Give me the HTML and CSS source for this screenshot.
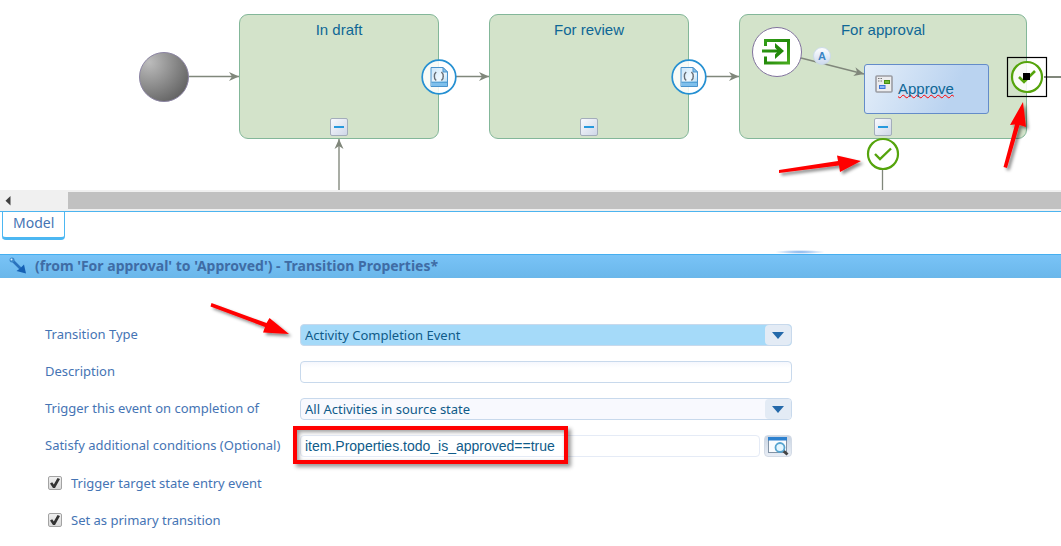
FILE: index.html
```
<!DOCTYPE html>
<html lang="en">
<head>
<meta charset="utf-8">
<title>Transition Properties</title>
<link rel="stylesheet" href="styles.css">
</head>
<body>
<main class="app">
  <section class="canvas" aria-label="Workflow diagram">
    <svg class="links" width="2000" height="190" aria-hidden="true">
      <defs>
        <radialGradient id="ball" cx="0.2" cy="0.2" r="0.95">
          <stop offset="0" stop-color="#bcbcbc"/><stop offset="1" stop-color="#606060"/>
        </radialGradient>
        <marker id="head" viewBox="0 0 10 10" refX="10" refY="5" markerWidth="10" markerHeight="10" markerUnits="userSpaceOnUse" orient="auto">
          <path d="M0 .5 10 5 0 9.5 3 5z" fill="#80877b"/>
        </marker>
      </defs>
      <g stroke="#80877b" stroke-width="1.3" fill="none">
        <path d="M188 76.500H239" marker-end="url(#head)"/>
        <path d="M455 76.500H489" marker-end="url(#head)"/>
        <path d="M705 76.500H739" marker-end="url(#head)"/>
        <path d="M339 190V139" stroke="#a9ada5" stroke-width="2" marker-end="url(#head)"/>
        <path d="M882.500 168V190"/>
        <path d="M1044 77H2000" stroke-width="2"/>
      </g>
      <circle cx="164" cy="77" r="24.500" fill="url(#ball)" stroke="#8b84a3"/>
    </svg>

    <div class="state draft"><h2 class="state-name">In draft</h2><button class="collapse" aria-label="Collapse In draft"></button></div>
    <div class="state review"><h2 class="state-name">For review</h2><button class="collapse" aria-label="Collapse For review"></button></div>
    <div class="state approval"><h2 class="state-name">For approval</h2><button class="collapse" aria-label="Collapse For approval"></button></div>

    <div class="activity">
      <svg width="18" height="18" viewBox="0 0 18 18" aria-hidden="true">
        <rect x="1" y="1" width="16" height="16" rx="1" fill="#ececee" stroke="#9a9ca3" stroke-width="1.600"/>
        <path d="M3 3.500h1.500M5.500 3.500H7M3 6h1.500M5.500 6H7" stroke="#777" stroke-width="1.200"/>
        <rect x="9.500" y="5.500" width="5" height="3" fill="#6fba35" stroke="#458f12"/>
        <rect x="4.500" y="10.500" width="5.500" height="3" fill="#8db8f8" stroke="#3c76d8"/>
      </svg>
      <span class="activity-name">Approve</span>
    </div>

    <svg class="links" width="2000" height="190" aria-hidden="true">
      <defs>
        <linearGradient id="page" x1="0" y1="0" x2="1" y2="1">
          <stop offset="0" stop-color="#c9e5fa"/><stop offset=".55" stop-color="#f0f9ff"/><stop offset="1" stop-color="#9fd2f4"/>
        </linearGradient>
        <linearGradient id="green" x1="0" y1="0" x2="1" y2="1">
          <stop offset="0" stop-color="#34a01a"/><stop offset=".5" stop-color="#22890a"/><stop offset="1" stop-color="#48ab1e"/>
        </linearGradient>
        <linearGradient id="chip" x1="0" y1="0" x2="0" y2="1">
          <stop offset="0" stop-color="#fff"/><stop offset="1" stop-color="#ccd9ee"/>
        </linearGradient>
        <filter id="cast" x="-30%" y="-30%" width="170%" height="170%">
          <feDropShadow dx="2.500" dy="2.500" stdDeviation="1.500" flood-color="#000" flood-opacity=".45"/>
        </filter>
        <g id="script">
          <circle r="16.800" fill="#fff" fill-opacity=".85" stroke="#2590d2" stroke-width="1.700"/>
          <path d="M-8-9.500H4L8.500-5V9.500H-8z" fill="url(#page)" stroke="#4a93cc"/>
          <path d="M-7.500 5.500h15.500v3.500h-15.500z" fill="#7fc0ec"/>
          <path d="M-7.500 5.200h15.500" stroke="#328bc9"/>
          <path d="M4-9.500V-5h4.500z" fill="#8bc4ec" stroke="#4a93cc"/>
          <path d="M-2.800-5Q-5-3-4.600-.8-5 1.500-2.800 3.500M2.400-5Q4.600-3 4.200-.8 4.600 1.500 2.400 3.500" fill="none" stroke="#666d75" stroke-width="1.400"/>
        </g>
      </defs>
      <use href="#script" x="439" y="77"/>
      <use href="#script" x="689" y="77"/>

      <path d="M801 58 864 74" stroke="#80877b" stroke-width="1.600" marker-end="url(#head)"/>
      <circle cx="777" cy="52" r="24.500" fill="#fff" stroke="#81739d"/>
      <path d="M765.500 46V40.500H788.500V63H765.500V56.500M762 51H780" fill="none" stroke="url(#green)" stroke-width="3"/>
      <path d="M775 43 784 51 775 59V54.500L778 51 775 47.500z" fill="#22890a"/>
      <circle cx="822" cy="56" r="8.500" fill="url(#chip)" stroke="#ccdbe8"/>
      <text class="chip-text" x="822" y="60" text-anchor="middle">A</text>

      <circle cx="883" cy="154" r="15" fill="#fff" fill-opacity=".85" stroke="#55a40c" stroke-width="2.200"/>
      <path d="M875 154 880 159 891 148.500" fill="none" stroke="#55a40c" stroke-width="2.400"/>

      <rect x="1007.500" y="57.500" width="39" height="39" fill="none" stroke="#000" stroke-width="1.200"/>
      <circle cx="1027" cy="77" r="15" fill="#fff" fill-opacity=".85" stroke="#55a40c" stroke-width="2.200"/>
      <path d="M1019 77 1024 82 1035 71" fill="none" stroke="#55a40c" stroke-width="2.600"/>
      <path d="M1023 73h7v7h-7z"/>

      <g fill="#f00" filter="url(#cast)">
        <path d="M779 170 838 161 837 155.500 861 161 840 172 839 165.500 779 173z"/>
        <path d="M1003.500 167 1015 124.500 1010 125 1023 102 1026 127 1019.500 125 1007 168z"/>
      </g>
    </svg>
  </section>

  <div class="scrollbar" aria-hidden="true">
    <svg class="scroll-arrow" width="6" height="10" viewBox="0 0 6 10"><path d="M5.500 0V9.500L.5 4.700z" fill="#404040"/></svg>
    <div class="scroll-thumb"></div>
  </div>

  <nav class="tabs"><button class="tab">Model</button></nav>

  <header class="titlebar">
    <span class="grip" aria-hidden="true"></span>
    <svg width="18" height="18" viewBox="0 0 18 18" aria-hidden="true">
      <path d="M3 3 12 12" stroke="#2a72bd" stroke-width="2.600"/>
      <circle cx="3" cy="3" r="2.500" fill="#3a86c8"/><circle cx="2.500" cy="2.500" r="1" fill="#d8efff"/>
      <path d="M15 7.500 17 16.500 7.500 14 11 11.500z" fill="#1560b4"/>
    </svg>
    <h1 class="title">(from 'For approval' to 'Approved') - Transition Properties*</h1>
  </header>

  <form class="form">
    <svg class="pointer" width="90" height="44" aria-hidden="true">
      <path d="M1.500-1 56.500 19 59.500 14 79 30 53 28.500 55 23 .5 2.500z" fill="#f00" filter="url(#cast)"/>
    </svg>
    <label class="label" for="type">Transition Type</label>
    <div class="pick">
      <select class="field select active" id="type"><option>Activity Completion Event</option></select>
      <svg class="drop" viewBox="0 0 26 20" width="26" height="20" aria-hidden="true"><path d="M7 7H19L13 14z" fill="#2469aa"/></svg>
    </div>
    <label class="label" for="desc">Description</label>
    <input class="field" id="desc" type="text">
    <label class="label" for="scope">Trigger this event on completion of</label>
    <div class="pick">
      <select class="field select" id="scope"><option>All Activities in source state</option></select>
      <svg class="drop" viewBox="0 0 26 20" width="26" height="20" aria-hidden="true"><path d="M7 7H19L13 14z" fill="#2469aa"/></svg>
    </div>
    <label class="label" for="cond">Satisfy additional conditions (Optional)</label>
    <div class="condition">
      <input class="field expression" id="cond" type="text" value="item.Properties.todo_is_approved==true">
      <button class="lookup" type="button" aria-label="Browse conditions">
        <svg width="22" height="20" viewBox="0 0 22 20" aria-hidden="true">
          <rect x="1.500" y="1.500" width="18" height="15" fill="#f9fcff" stroke="#8293a5"/>
          <path d="M1 1h19v3.500H1z" fill="#2d81cf"/>
          <path d="M16 14.500 20.500 18.500" stroke="#444" stroke-width="3"/>
          <circle cx="13" cy="11.500" r="4.500" fill="#e1f5ff" fill-opacity=".9" stroke="#57a4cf" stroke-width="1.800"/>
        </svg>
      </button>
      <span class="highlight" aria-hidden="true"></span>
    </div>
    <label class="check"><input class="box" type="checkbox" checked>Trigger target state entry event</label>
    <label class="check"><input class="box" type="checkbox" checked>Set as primary transition</label>
  </form>
</main>
</body>
</html>
```
FILE: styles.css
```
* { box-sizing: border-box; }
body {
  margin: 0;
  background: #fff;
  color: #4574b4;
  font: 14px/20px "Noto Sans", "Open Sans", sans-serif;
}
button, input, select { font: inherit; }
.app { overflow: hidden; }

/* Diagram */
.canvas { position: relative; height: 190px; overflow: hidden; font-family: "Liberation Sans", Arial, sans-serif; }
.links { position: absolute; left: 0; top: 0; }
.state {
  position: absolute;
  top: 14px;
  width: 200px;
  height: 125px;
  padding: 5px 0 2px;
  border: 1px solid #83b799;
  border-radius: 9px;
  background: #d3e3ca;
  display: flex;
  flex-direction: column;
  align-items: center;
  justify-content: space-between;
}
.draft { left: 239px; }
.review { left: 489px; }
.approval { left: 739px; width: 288px; }
.state-name { margin: 0; font-size: 15px; line-height: 20px; font-weight: 400; color: #0e6796; }
.collapse {
  width: 18px;
  height: 18px;
  padding: 0 3px;
  border: 1px solid #a3adbb;
  border-radius: 2px;
  background: linear-gradient(135deg, #f8f9fd, #cfd8e8);
  display: flex;
  align-items: center;
}
.collapse::before { content: ""; flex: 1; height: 2px; background: #2799dd; }
.activity {
  position: absolute;
  left: 864px;
  top: 64px;
  width: 125px;
  height: 50px;
  padding: 10px;
  border: 1px solid #648cc9;
  border-radius: 3px;
  background: linear-gradient(115deg, #e4eef9, #bad3f0 70%);
  display: flex;
  gap: 5px;
}
.activity-name {
  align-self: end;
  font-size: 15px;
  line-height: 28px;
  color: #0e6796;
  text-decoration: underline wavy #f00 1px;
  text-decoration-skip-ink: none;
  text-underline-offset: 0;
}
.chip-text { font-size: 11px; font-weight: 700; fill: #3a86c5; }

/* Horizontal scrollbar */
.scrollbar {
  display: flex;
  align-items: center;
  height: 21px;
  padding-left: 5px;
  gap: 57px;
  background: #f0f0f0;
}
.scroll-thumb { flex: 1; height: 17px; background: #c1c1c1; }

/* Tabs */
.tabs { height: 43px; padding-left: 2px; border-top: 1px solid #4cb4ef; }
.tab {
  display: block;
  height: 28px;
  padding: 0 10px 4px;
  border: 1px solid #4cb7f2;
  border-top: 0;
  border-bottom-width: 3px;
  border-radius: 0 0 4px 4px;
  background: #fff;
  color: #4574b4;
  font-size: 14px;
}

/* Title bar */
.titlebar {
  position: relative;
  display: flex;
  align-items: center;
  gap: 8px;
  height: 24px;
  padding: 0 9px 2px;
  border-top: 1px solid #45aff0;
  background: linear-gradient(#79c3f7, #6ab7ea);
}
.title { margin: 0; font-size: 14px; line-height: 20px; font-weight: 700; color: #3f6ca5; }
.grip {
  position: absolute;
  left: 775px;
  bottom: 24px;
  width: 50px;
  height: 4px;
  background: radial-gradient(closest-side, #79aceb, #fff0);
}

/* Properties form */
.form {
  position: relative;
  display: grid;
  grid-template-columns: 240px minmax(0, 492px);
  column-gap: 15px;
  row-gap: 15px;
  padding: 46px 45px 16px;
}
.label, .check { line-height: 20px; font-size: 13px; white-space: nowrap; }
.field {
  display: block;
  width: 100%;
  height: 22px;
  padding: 0 4px;
  border: 1px solid #c8d9ec;
  border-radius: 4px;
  outline: 0;
  background: linear-gradient(#f5f7fd, #fff 6px);
  color: #0f5b89;
  font-size: 13px;
}
.select { appearance: none; background: #f8f9fe; }
.active { background: #a5daf9; }
.pick { position: relative; }
.drop {
  position: absolute;
  right: 1px;
  top: 1px;
  border-radius: 4px;
  background: #e3ebf5;
  pointer-events: none;
}
.condition { position: relative; display: flex; gap: 4px; }
.expression {
  flex: 1;
  min-width: 0;
  border-color: #e5ebf6;
  background: #fff;
  font-family: "Liberation Sans", Arial, sans-serif;
  font-size: 14px;
}
.lookup {
  width: 28px;
  height: 22px;
  padding: 0;
  border: 1px solid #d3dbe6;
  border-radius: 4px;
  background: linear-gradient(#cad5e3, #e8edf5);
  display: grid;
  place-items: center;
}
.highlight {
  position: absolute;
  left: -7px;
  top: -9px;
  width: 275px;
  height: 38px;
  border: 4px solid #f00;
  box-shadow: 3px 3px 4px #0006, inset 2px 2px 4px #0006;
  pointer-events: none;
}
.check { grid-column: 1 / -1; display: flex; align-items: center; gap: 9px; padding-left: 3px; height: 22px; }
.box {
  appearance: none;
  width: 14px;
  height: 14px;
  margin: 0;
  border: 1px solid #a3a3a3;
  border-radius: 2px;
  background: linear-gradient(#f0f0f0, #d9d9d9);
  display: grid;
  place-items: center;
}
.box:checked::before {
  content: "";
  width: 10px;
  height: 10px;
  background: #333;
  clip-path: polygon(0 55%, 22% 42%, 38% 65%, 75% 0, 100% 10%, 50% 100%, 30% 100%);
}
.pointer { position: absolute; left: 210px; top: 26px; overflow: visible; }
```
